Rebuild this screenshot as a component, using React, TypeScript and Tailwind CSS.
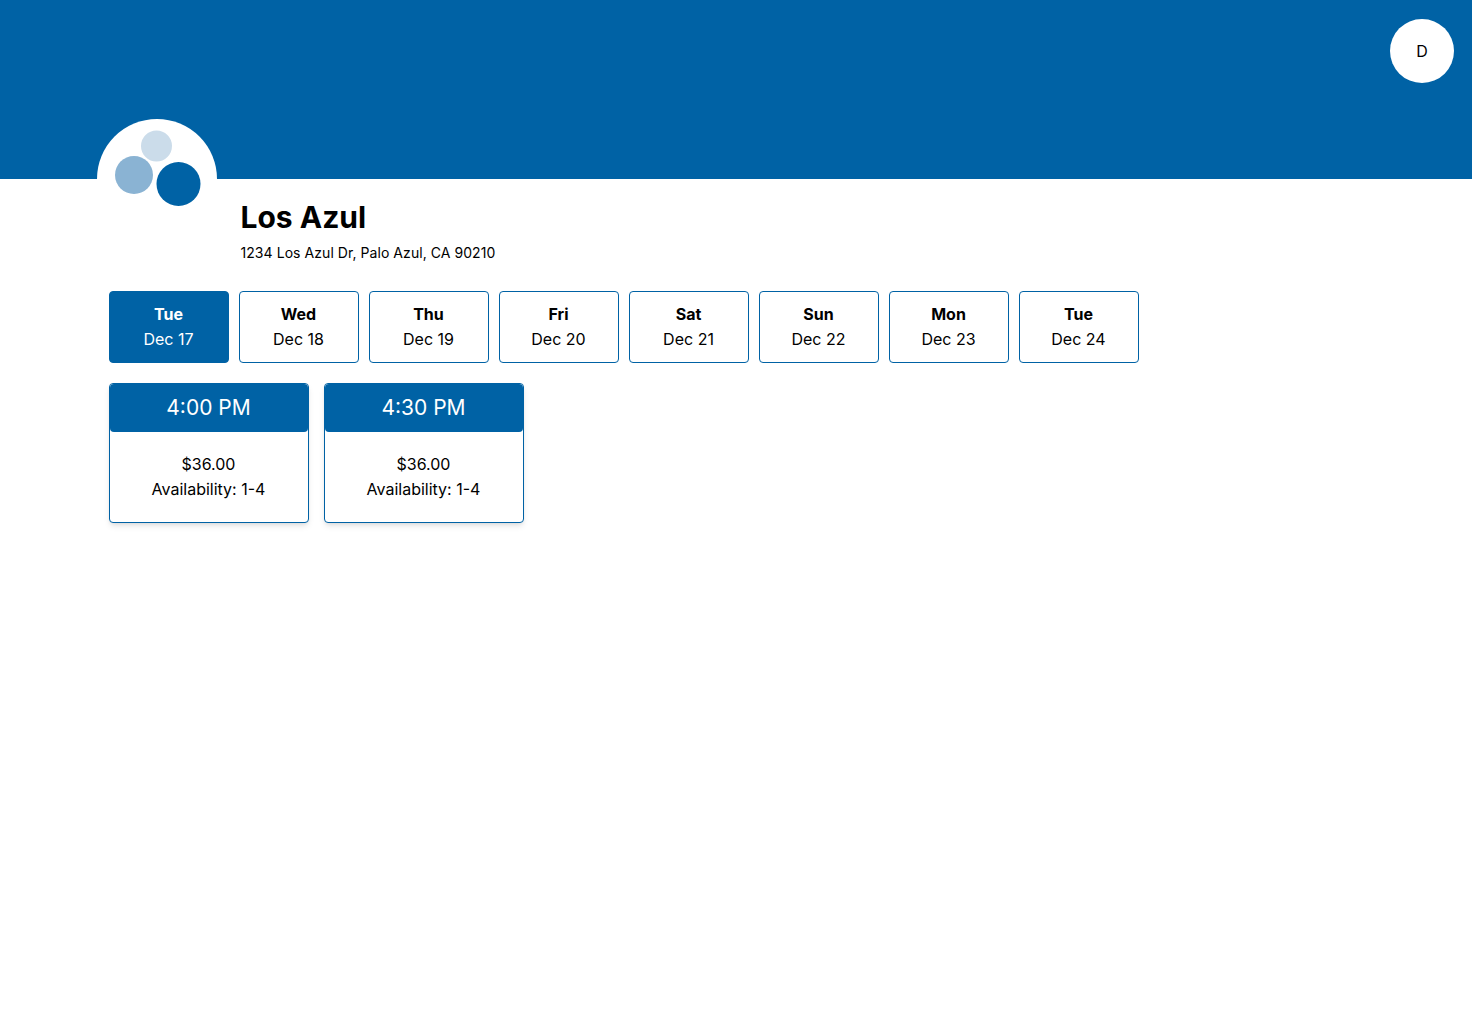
const days = [
  { day: "Tue", date: "Dec 17" },
  { day: "Wed", date: "Dec 18" },
  { day: "Thu", date: "Dec 19" },
  { day: "Fri", date: "Dec 20" },
  { day: "Sat", date: "Dec 21" },
  { day: "Sun", date: "Dec 22" },
  { day: "Mon", date: "Dec 23" },
  { day: "Tue", date: "Dec 24" },
];

const times = ["4:00 PM", "4:30 PM"];

function Logo() {
  return (
    <svg width="120" height="120" viewBox="0 0 120 120">
      <circle cx="59.5" cy="27" r="15.5" fill="#cbdcea" />
      <circle cx="37" cy="56" r="19" fill="#8ab3d3" />
      <circle cx="81.5" cy="65" r="22" fill="#0062a5" />
    </svg>
  );
}

export default function App() {
  return (
    <div className="min-h-screen bg-white text-black font-['Inter',sans-serif]">
      <header className="relative h-[179px] bg-[#0062a5]">
        <button className="absolute right-[18px] top-[19px] flex h-16 w-16 items-center justify-center rounded-full bg-white text-base">
          D
        </button>
        <div className="absolute left-[97px] top-[119px] h-[120px] w-[120px] rounded-full bg-white">
          <Logo />
        </div>
      </header>
      <main className="px-[109px]">
        <div className="ml-[131.5px] pt-5">
          <h1 className="text-3xl leading-9 font-bold">Los Azul</h1>
          <p className="mt-2 text-sm leading-5 tracking-[0.06px]">1234 Los Azul Dr, Palo Azul, CA 90210</p>
        </div>
        <div className="mt-[28px] flex gap-2.5">
          {days.map((d, i) => (
            <button
              key={i}
              className={
                i === 0
                  ? "flex h-[72px] w-[120px] flex-col items-center justify-center rounded border border-[#0062a5] bg-[#0062a5] pr-px text-base leading-[25px] text-white"
                  : "flex h-[72px] w-[120px] flex-col items-center justify-center rounded border border-[#0062a5] bg-white pr-px text-base leading-[25px] text-black"
              }
            >
              <span className="font-bold">{d.day}</span>
              <span>{d.date}</span>
            </button>
          ))}
        </div>
        <div className="mt-5 flex gap-[15px]">
          {times.map((t) => (
            <div
              key={t}
              className="flex h-[140px] w-[200px] flex-col rounded border border-[#0062a5] bg-white text-center shadow-md"
            >
              <div className="flex h-12 items-center justify-center rounded bg-[#0062a5] pr-px pb-px text-[21px] text-white">
                {t}
              </div>
              <div className="flex flex-1 flex-col justify-center pr-px text-base leading-[25px]">
                <span>$36.00</span>
                <span>Availability: 1-4</span>
              </div>
            </div>
          ))}
        </div>
      </main>
    </div>
  );
}
